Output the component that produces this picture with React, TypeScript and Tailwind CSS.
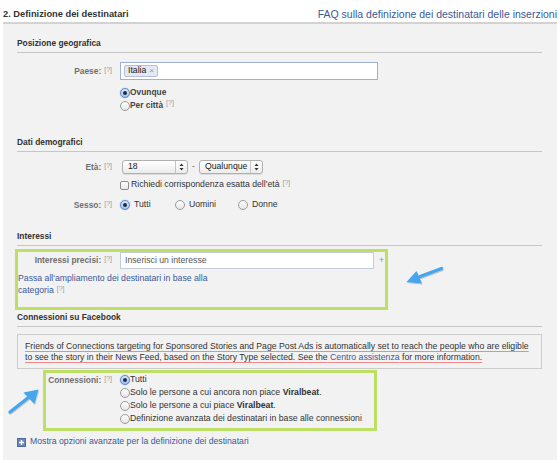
import React from "react";

function Q() {
  return <span className="ml-[3px] text-[7px] text-[#9a9a9a] font-normal relative -top-[2px]">[?]</span>;
}

function Radio({ checked }: { checked?: boolean }) {
  return (
    <span
      className={
        "inline-flex items-center justify-center w-[10px] h-[10px] rounded-full border shrink-0 " +
        (checked
          ? "border-[#5b86c4] bg-[linear-gradient(#dbe9fb,#9fc2ee)] shadow-[0_0_1px_#6a9be0]"
          : "border-[#9a9a9a] bg-[linear-gradient(#ffffff,#e6e6e6)]")
      }
    >
      {checked && <span className="w-[4px] h-[4px] rounded-full bg-[#1f2d45]" />}
    </span>
  );
}

function UpDown() {
  return (
    <svg width="5" height="8" viewBox="0 0 5 8">
      <path d="M2.5 0.5 L4.5 3 L0.5 3 Z" fill="#333" />
      <path d="M2.5 7.5 L4.5 5 L0.5 5 Z" fill="#333" />
    </svg>
  );
}

function Select({ value, width }: { value: string; width: string }) {
  return (
    <div
      className={
        "flex items-center h-[14px] rounded-[3px] border border-[#b0b0b0] bg-[linear-gradient(#ffffff,#ececec)] shadow-[0_1px_0_#ddd] " +
        width
      }
    >
      <span className="flex-1 pl-[5px] text-[#222]">{value}</span>
      <span className="flex items-center justify-center w-[12px] h-full border-l border-[#c4c4c4]">
        <UpDown />
      </span>
    </div>
  );
}

function SectionTitle({ children, className = "" }: { children: React.ReactNode; className?: string }) {
  return (
    <div className={"font-bold text-[8.4px] text-[#333] leading-[10px] pb-[4px] border-b border-[#c6c6c6] " + className}>
      {children}
    </div>
  );
}

function Label({ children, width = "w-[103px]" }: { children: React.ReactNode; width?: string }) {
  return (
    <div className={"shrink-0 text-right pr-[8px] font-bold text-[8.4px] text-[#6f6f6f] " + width}>
      {children}
      <Q />
    </div>
  );
}

const ul = "underline decoration-[#f08a8a] underline-offset-[2px]";

export default function App() {
  return (
    <div className="relative w-[560px] h-[463px] bg-white text-[8.7px] text-[#333] font-['Liberation_Sans',Arial,sans-serif] overflow-hidden">
      <div className="flex justify-between items-center px-[3px] pt-[9px] h-[22px] leading-[10px]">
        <span className="font-bold text-[9.3px] text-[#333] pb-[3px]">2. Definizione dei destinatari</span>
        <span className="text-[10.5px] text-[#3b5998] pb-[3px]">FAQ sulla definizione dei destinatari delle inserzioni</span>
      </div>
      <div className="mx-[3px] h-[438px] bg-[#f2f2f2] border-t-2 border-[#d2d2d2] pl-[14px] pr-[15px]">
        {/* Posizione geografica */}
        <SectionTitle className="mt-[14px]">Posizione geografica</SectionTitle>
        <div className="flex items-center mt-[9px]">
          <Label>Paese:</Label>
          <div className="flex items-center w-[258px] h-[18px] bg-white border border-[#9fb0d3] px-[3px]">
            <span className="flex items-center h-[12px] px-[3px] bg-[#e4e8f1] border border-[#b3bfd8] rounded-[2px] text-[#222]">
              Italia <span className="ml-[3px] text-[#8a96ae] text-[8px]">×</span>
            </span>
          </div>
        </div>
        <div className="ml-[103px] mt-[6px] flex flex-col">
          <div className="flex items-center h-[13px] font-bold text-[8.4px] text-[#444]">
            <Radio checked />
            <span>Ovunque</span>
          </div>
          <div className="flex items-center h-[13px] font-bold text-[8.4px] text-[#444]">
            <Radio />
            <span>Per città</span>
            <Q />
          </div>
        </div>

        {/* Dati demografici */}
        <SectionTitle className="mt-[25px]">Dati demografici</SectionTitle>
        <div className="flex items-center mt-[8px] h-[14px]">
          <Label>Età:</Label>
          <div className="flex items-center ml-[2px]">
            <Select value="18" width="w-[66px]" />
            <span className="mx-[4px] text-[#666]">-</span>
            <Select value="Qualunque" width="w-[64px]" />
          </div>
        </div>
        <div className="flex items-center h-[14px] mt-[4px] ml-[103px]">
          <span className="w-[9px] h-[9px] rounded-[2px] border border-[#8e8e8e] bg-[linear-gradient(#fff,#e8e8e8)] mr-[2px]" />
          <span className="text-[#333]">Richiedi corrispondenza esatta dell'età</span>
          <Q />
        </div>
        <div className="flex items-center h-[14px] mt-[6px]">
          <Label>Sesso:</Label>
          <div className="flex items-center">
            <div className="flex items-center w-[55px]">
              <Radio checked />
              <span className="ml-[4px] text-[#333]">Tutti</span>
            </div>
            <div className="flex items-center w-[63px]">
              <Radio />
              <span className="ml-[4px] text-[#333]">Uomini</span>
            </div>
            <div className="flex items-center">
              <Radio />
              <span className="ml-[4px] text-[#333]">Donne</span>
            </div>
          </div>
        </div>

        {/* Interessi */}
        <SectionTitle className="mt-[19px]">Interessi</SectionTitle>
        <div className="mt-[3px] -ml-[2px] w-[373px] h-[61px] border-[3px] border-[#bddf63]">
          <div className="flex items-center h-[17px]">
            <Label width="w-[102px]">Interessi precisi:</Label>
            <div className="flex items-center w-[254px] h-[17px] bg-white border border-[#c4cbdb] px-[4px] text-[#555]">
              Inserisci un interesse
            </div>
            <span className="ml-[5px] text-[#8a96ae] text-[9px]">+</span>
          </div>
          <div className="mt-[3px] leading-[12px] text-[#3b5998]">
            Passa all'ampliamento dei destinatari in base alla
            <br />
            categoria
            <Q />
          </div>
        </div>

        {/* Connessioni */}
        <SectionTitle className="mt-[2px]">Connessioni su Facebook</SectionTitle>
        <div className="mt-[7px] border border-[#cccccc] pl-[7px] pt-[6px] pb-[5px] leading-[11px] text-[#333] whitespace-nowrap">
          <span className={ul}>
            Friends of Connections targeting for Sponsored Stories and Page Post Ads is automatically set to reach the people who are eligible
          </span>
          <br />
          <span className={ul}>
            to see the story in their News Feed, based on the Story Type selected. See the{" "}
            <span className="text-[#3b5998]">Centro assistenza</span> for more information.
          </span>
        </div>
        <div className="mt-[1px] ml-[26px] w-[334px] h-[61px] border-[3px] border-[#bddf63] flex">
          <div className="w-[74px] text-right pr-[8px] font-bold text-[8.4px] text-[#6f6f6f] pt-[1px]">
            Connessioni:
            <Q />
          </div>
          <div className="flex flex-col">
            <div className="flex items-center h-[13px]">
              <Radio checked />
              <span>Tutti</span>
            </div>
            <div className="flex items-center h-[13px]">
              <Radio />
              <span>
                Solo le persone a cui ancora non piace <b>Viralbeat</b>.
              </span>
            </div>
            <div className="flex items-center h-[13px]">
              <Radio />
              <span>
                Solo le persone a cui piace <b>Viralbeat</b>.
              </span>
            </div>
            <div className="flex items-center h-[13px]">
              <Radio />
              <span>Definizione avanzata dei destinatari in base alle connessioni</span>
            </div>
          </div>
        </div>
        <div className="flex items-center mt-[6px] h-[10px]">
          <span className="flex items-center justify-center w-[9px] h-[9px] border border-[#4c6aa5] bg-[#6d86b8] mr-[4px]">
            <svg width="7" height="7" viewBox="0 0 7 7">
              <path d="M3.5 1 V6 M1 3.5 H6" stroke="#fff" strokeWidth="1.4" />
            </svg>
          </span>
          <span className="text-[#3b5998]">Mostra opzioni avanzate per la definizione dei destinatari</span>
        </div>
      </div>

      {/* annotation arrows */}
      <svg className="absolute left-0 top-0 pointer-events-none" width="560" height="463">
        <defs>
          <filter id="sh" x="-20%" y="-20%" width="140%" height="140%">
            <feDropShadow dx="0.5" dy="1" stdDeviation="0.6" floodColor="#000" floodOpacity="0.25" />
          </filter>
        </defs>
        <g filter="url(#sh)" fill="#45a6ef">
          <path d="M441.5 268.5 L420 276.5" stroke="#45a6ef" strokeWidth="3.2" strokeLinecap="round" />
          <path d="M406.5 282 L416.5 271 L422 283.5 Z" />
          <path d="M10 412 L29 397" stroke="#45a6ef" strokeWidth="3.2" strokeLinecap="round" />
          <path d="M38.5 389.5 L23.5 392.5 L34.5 404 Z" />
        </g>
      </svg>
    </div>
  );
}
